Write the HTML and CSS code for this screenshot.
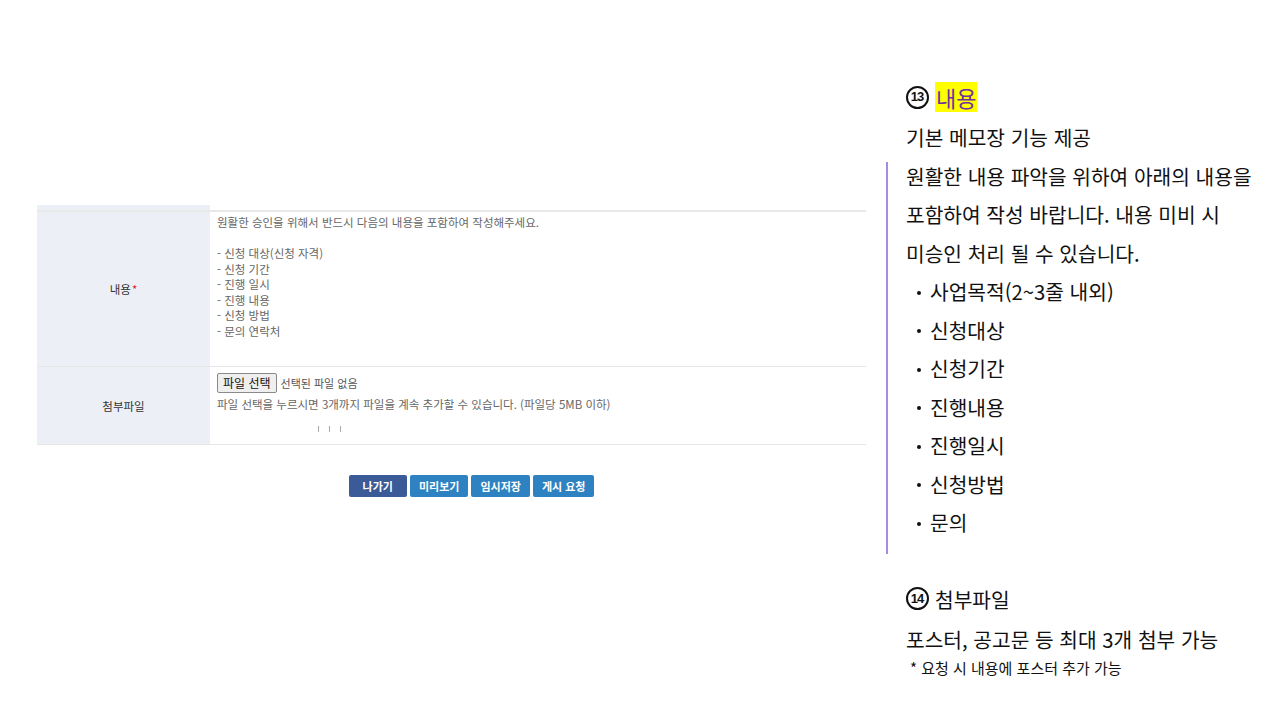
FILE: index.html
```html
<!DOCTYPE html>
<html lang="ko">
<head>
    <meta charset="UTF-8">
    <meta name="viewport" content="width=device-width, initial-scale=1.0">
    <title>게시 요청 - 내용</title>
    <link rel="stylesheet" href="styles.css">
</head>
<body>

    <div class="page">
        <div class="form-area">
            <table class="form-table">
                <tr class="row-prev">
                    <th></th>
                    <td></td>
                </tr>
                <tr class="row-content">
                    <th>내용<span class="req">*</span></th>
                    <td>
                        <div class="memo">원활한 승인을 위해서 반드시 다음의 내용을 포함하여 작성해주세요.<br><br>- 신청 대상(신청 자격)<br>- 신청 기간<br>- 진행 일시<br>- 진행 내용<br>- 신청 방법<br>- 문의 연락처</div>
                    </td>
                </tr>
                <tr class="row-file">
                    <th>첨부파일</th>
                    <td>
                        <div class="file-line">
                            <button class="file-btn">파일 선택</button>
                            <span class="file-none">선택된 파일 없음</span>
                        </div>
                        <p class="file-help">파일 선택을 누르시면 3개까지 파일을 계속 추가할 수 있습니다. (파일당 5MB 이하)</p>
                        <div class="ticks"><span></span><span></span><span></span></div>
                    </td>
                </tr>
            </table>

            <div class="btn-row">
                <button class="btn btn-dark">나가기</button>
                <button class="btn">미리보기</button>
                <button class="btn">임시저장</button>
                <button class="btn">게시 요청</button>
            </div>
        </div>

        <div class="notes">
            <div class="note-line note-title"><span class="num">13</span><span class="mark">내용</span></div>
            <div class="note-line">기본 메모장 기능 제공</div>
            <div class="note-box">
                <div class="note-line">원활한 내용 파악을 위하여 아래의 내용을</div>
                <div class="note-line">포함하여 작성 바랍니다. 내용 미비 시</div>
                <div class="note-line">미승인 처리 될 수 있습니다.</div>
                <div class="note-line item"><span class="dot"></span>사업목적(2~3줄 내외)</div>
                <div class="note-line item"><span class="dot"></span>신청대상</div>
                <div class="note-line item"><span class="dot"></span>신청기간</div>
                <div class="note-line item"><span class="dot"></span>진행내용</div>
                <div class="note-line item"><span class="dot"></span>진행일시</div>
                <div class="note-line item"><span class="dot"></span>신청방법</div>
                <div class="note-line item"><span class="dot"></span>문의</div>
            </div>
            <div class="note-line note-title second"><span class="num">14</span>첨부파일</div>
            <div class="note-line">포스터, 공고문 등 최대 3개 첨부 가능</div>
            <div class="note-line note-small">* 요청 시 내용에 포스터 추가 가능</div>
        </div>
    </div>

</body>
</html>
```

FILE: styles.css
```css
body {
    margin: 0;
    background-color: #fff;
    font-family: "Noto Sans CJK KR", "Noto Sans", sans-serif;
    color: #111;
}

.page {
    display: flex;
    width: 1280px;
    height: 720px;
    overflow: hidden;
}

/* left: captured form */
.form-area {
    width: 829px;
    margin-left: 37px;
    padding-top: 205px;
}

.form-table {
    width: 100%;
    border-collapse: collapse;
    font-size: 11.5px;
}

.form-table th {
    width: 173px;
    background-color: #ecf0f6;
    color: #333;
    font-weight: normal;
    text-align: center;
    padding: 0;
}

.form-table td {
    padding: 0 0 0 7px;
    vertical-align: top;
    color: #666;
}

.form-table tr {
    border-bottom: 1px solid #e6e6e6;
}

.row-prev th,
.row-prev td {
    height: 5px;
}

.row-prev {
    border-bottom: 2px solid #e9e9e9 !important;
}

.row-content th,
.row-content td {
    height: 154px;
}

.req {
    color: #e02020;
    margin-left: 1px;
}

.memo {
    padding-top: 3px;
    line-height: 15.5px;
}

.row-file th,
.row-file td {
    height: 77px;
}

.file-line {
    display: flex;
    align-items: center;
    margin-top: 6px;
}

.file-btn {
    font-family: inherit;
    font-size: 12px;
    color: #111;
    background-color: #efefef;
    border: 1px solid #8a8a8a;
    border-radius: 2px;
    height: 20px;
    padding: 0 5px;
    line-height: 16px;
}

.file-none {
    margin-left: 4px;
    font-size: 11px;
    color: #555;
}

.file-help {
    margin: 3px 0 0;
    font-size: 11.5px;
    line-height: 16px;
}

.ticks {
    display: flex;
    margin: 14px 0 0 101px;
}

.ticks span {
    width: 1px;
    height: 6px;
    background-color: #aaa;
    margin-right: 10px;
}

.btn-row {
    display: flex;
    justify-content: center;
    gap: 3px;
    margin-top: 30px;
    padding-left: 40px;
}

.btn {
    font-family: inherit;
    font-size: 11px;
    font-weight: bold;
    color: #fff;
    background-color: #2e82c1;
    border: none;
    border-radius: 2px;
    height: 22px;
    padding: 0 9px;
}

.btn-dark {
    background-color: #3b5a98;
    padding: 0 14px;
}

/* right: notes */
.notes {
    display: flex;
    flex-direction: column;
    gap: 10.5px;
    margin-left: 40px;
    padding-top: 83px;
}

.note-line {
    font-size: 20.3px;
    line-height: 28px;
    height: 28px;
    white-space: nowrap;
}

.note-title {
    display: flex;
    align-items: center;
    margin-bottom: 1.5px;
}

.num {
    display: inline-flex;
    align-items: center;
    justify-content: center;
    width: 23px;
    height: 23px;
    box-sizing: border-box;
    border: 2.5px solid #111;
    border-radius: 50%;
    font-family: "Liberation Sans", sans-serif;
    font-size: 13px;
    font-weight: bold;
    letter-spacing: -1px;
    padding-right: 1px;
    margin-right: 6px;
}

.mark {
    font-size: 22px;
    background-color: #ffff00;
    color: #7030a0;
    line-height: 30px;
    padding: 0 1px;
}

.note-box {
    display: flex;
    flex-direction: column;
    gap: 10.5px;
    border-left: 2px solid #a58be8;
    padding: 0 0 18px 18px;
    margin-left: -20px;
}

.item {
    display: flex;
    align-items: center;
    padding-left: 11px;
}

.dot {
    width: 4px;
    height: 4px;
    border-radius: 50%;
    background-color: #111;
    margin: 3px 9px 0 0;
}

.second {
    margin-top: 20px;
}

.note-small {
    font-size: 15px;
    line-height: 22px;
    height: 22px;
    padding-left: 4px;
    margin-top: -6px;
}
```
